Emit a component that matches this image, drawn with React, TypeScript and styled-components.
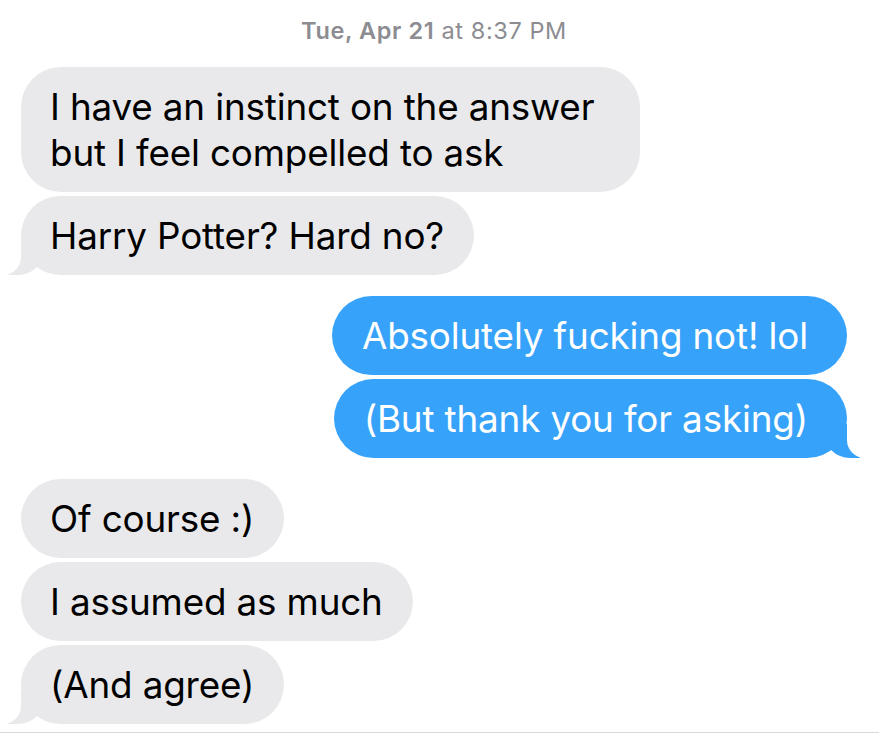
import React from "react";
import styled, { createGlobalStyle, css } from "styled-components";

const Global = createGlobalStyle`
  html, body { margin: 0; padding: 0; background: #ffffff; }
  body { font-family: Inter, "Liberation Sans", sans-serif; -webkit-font-smoothing: antialiased; }
`;

const Screen = styled.div`
  width: 879px;
  height: 748px;
  background: #ffffff;
  display: flex;
  flex-direction: column;
  overflow: hidden;
`;

const Thread = styled.div`
  flex: 1;
  display: flex;
  flex-direction: column;
  padding: 17px 32px 0 21px;
`;

const Stamp = styled.div`
  align-self: center;
  font-size: 23.5px;
  line-height: 28px;
  letter-spacing: 0.6px;
  color: #8c8c91;
  margin-bottom: 22px;
  b { font-weight: 600; }
  span { font-weight: 400; }
`;

const Group = styled.div<{ $sent?: boolean }>`
  display: flex;
  flex-direction: column;
  align-items: ${(p) => (p.$sent ? "flex-end" : "flex-start")};
  gap: 4px;
  margin-bottom: 21px;
  &:last-child { margin-bottom: 0; }
`;

const Bubble = styled.div<{ $sent?: boolean; $tail?: boolean }>`
  position: relative;
  max-width: 560px;
  padding: ${(p) => (p.$sent ? "16.5px 39px 16.5px 30px" : "16.5px 30px 16.5px 29px")};
  border-radius: 40px;
  font-size: 36.8px;
  line-height: 46px;
  letter-spacing: -0.15px;
  background: ${(p) => (p.$sent ? "#37a2f9" : "#e9e9eb")};
  color: ${(p) => (p.$sent ? "#ffffff" : "#000000")};
  ${(p) =>
    p.$tail &&
    !p.$sent &&
    css`
      &::before {
        content: "";
        position: absolute;
        bottom: 0;
        left: -13px;
        width: 36px;
        height: 34px;
        background: #e9e9eb;
        border-bottom-right-radius: 26px;
      }
      &::after {
        content: "";
        position: absolute;
        bottom: 0;
        left: -46px;
        width: 46px;
        height: 34px;
        background: #ffffff;
        border-bottom-right-radius: 18px;
      }
    `}
  ${(p) =>
    p.$tail &&
    p.$sent &&
    css`
      &::before {
        content: "";
        position: absolute;
        bottom: 0;
        right: -13px;
        width: 36px;
        height: 34px;
        background: #37a2f9;
        border-bottom-left-radius: 26px;
      }
      &::after {
        content: "";
        position: absolute;
        bottom: 0;
        right: -46px;
        width: 46px;
        height: 34px;
        background: #ffffff;
        border-bottom-left-radius: 18px;
      }
    `}
`;

const Text = styled.span`
  position: relative;
  z-index: 1;
`;

const Divider = styled.div`
  height: 1px;
  background: #d9d9d9;
  margin-bottom: 15px;
`;

type Msg = { text: string; tail?: boolean };

const groups: { sent?: boolean; msgs: Msg[] }[] = [
  {
    msgs: [
      { text: "I have an instinct on the answer but I feel compelled to ask" },
      { text: "Harry Potter? Hard no?", tail: true },
    ],
  },
  {
    sent: true,
    msgs: [
      { text: "Absolutely fucking not! lol" },
      { text: "(But thank you for asking)", tail: true },
    ],
  },
  {
    msgs: [
      { text: "Of course :)" },
      { text: "I assumed as much" },
      { text: "(And agree)", tail: true },
    ],
  },
];

export default function App() {
  return (
    <Screen>
      <Global />
      <Thread>
        <Stamp>
          <b>Tue, Apr 21</b> <span>at 8:37 PM</span>
        </Stamp>
        {groups.map((g, i) => (
          <Group key={i} $sent={g.sent}>
            {g.msgs.map((m, j) => (
              <Bubble key={j} $sent={g.sent} $tail={m.tail}>
                <Text>{m.text}</Text>
              </Bubble>
            ))}
          </Group>
        ))}
      </Thread>
      <Divider />
    </Screen>
  );
}
